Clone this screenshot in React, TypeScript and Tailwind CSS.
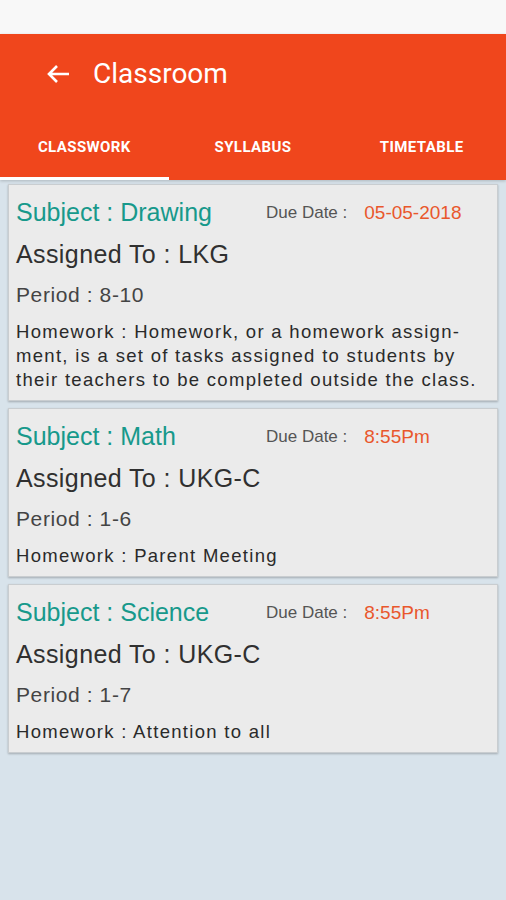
import React from "react";

interface Work {
  subject: string;
  due: string;
  assigned: string;
  period: string;
  homework: string;
}

const works: Work[] = [
  {
    subject: "Drawing",
    due: "05-05-2018",
    assigned: "LKG",
    period: "8-10",
    homework:
      "Homework, or a homework assign\u00ADment, is a set of tasks assigned to students by their teachers to be completed outside the class.",
  },
  {
    subject: "Math",
    due: "8:55Pm",
    assigned: "UKG-C",
    period: "1-6",
    homework: "Parent Meeting",
  },
  {
    subject: "Science",
    due: "8:55Pm",
    assigned: "UKG-C",
    period: "1-7",
    homework: "Attention to all",
  },
];

const WorkCard: React.FC<{ work: Work }> = ({ work }) => {
  const { subject, due, assigned, period, homework } = work;
  return (
    <div className="border border-[#c9cdd0] bg-[#ebebeb] shadow-[0_1px_2px_rgba(0,0,0,0.25)] pl-[7px] pr-[16px] pt-[12px] pb-[8px] font-['Liberation_Sans',Arial,sans-serif]">
      <div className="flex items-center h-[32px]">
        <p className="w-[250px] text-[25px] text-[#17998b]">Subject : {subject}</p>
        <p className="text-[17px] text-[#555]">Due Date :</p>
        <p className="ml-[17px] text-[19px] text-[#e9572c]">{due}</p>
      </div>
      <p className="mt-[9px] h-[32px] leading-[32px] text-[25px] tracking-[0.4px] text-[#303030]">
        Assigned To : {assigned}
      </p>
      <p className="mt-[11px] h-[28px] leading-[28px] text-[21px] tracking-[0.6px] text-[#444]">
        Period : {period}
      </p>
      <p className="mt-[11px] leading-[24px] text-[18.5px] tracking-[1.3px] text-[#2a2a2a] hyphens-manual">
        Homework : {homework}
      </p>
    </div>
  );
};

const App: React.FC = () => {
  const tabs = ["CLASSWORK", "SYLLABUS", "TIMETABLE"];
  return (
    <div className="w-[506px] h-[900px] bg-[#d8e3eb] flex flex-col">
      <div className="h-[34px] bg-[#f8f8f8]" />
      <div className="bg-[#f0461c] shadow-[0_1px_3px_rgba(0,0,0,0.2)] font-['Roboto',sans-serif]">
        <div className="h-[80px] flex items-center">
          <svg className="ml-[46px]" width="24" height="20" viewBox="0 0 24 20" fill="none">
            <path d="M23 10H3M11 2L3 10L11 18" stroke="white" strokeWidth="2.6" />
          </svg>
          <h1 className="ml-[23px] text-[28px] text-white">Classroom</h1>
        </div>
        <div className="h-[66px] grid grid-cols-3">
          {tabs.map((t, i) => (
            <div key={t} className="relative flex items-center justify-center">
              <span className="text-[15px] font-bold tracking-[0.4px] text-white">{t}</span>
              {i === 0 && <div className="absolute left-0 right-0 bottom-0 h-[3px] bg-white" />}
            </div>
          ))}
        </div>
      </div>
      <div className="mt-[4px] mx-[8px] flex flex-col gap-[7px]">
        {works.map((w) => (
          <WorkCard key={w.subject} work={w} />
        ))}
      </div>
    </div>
  );
};

export default App;
